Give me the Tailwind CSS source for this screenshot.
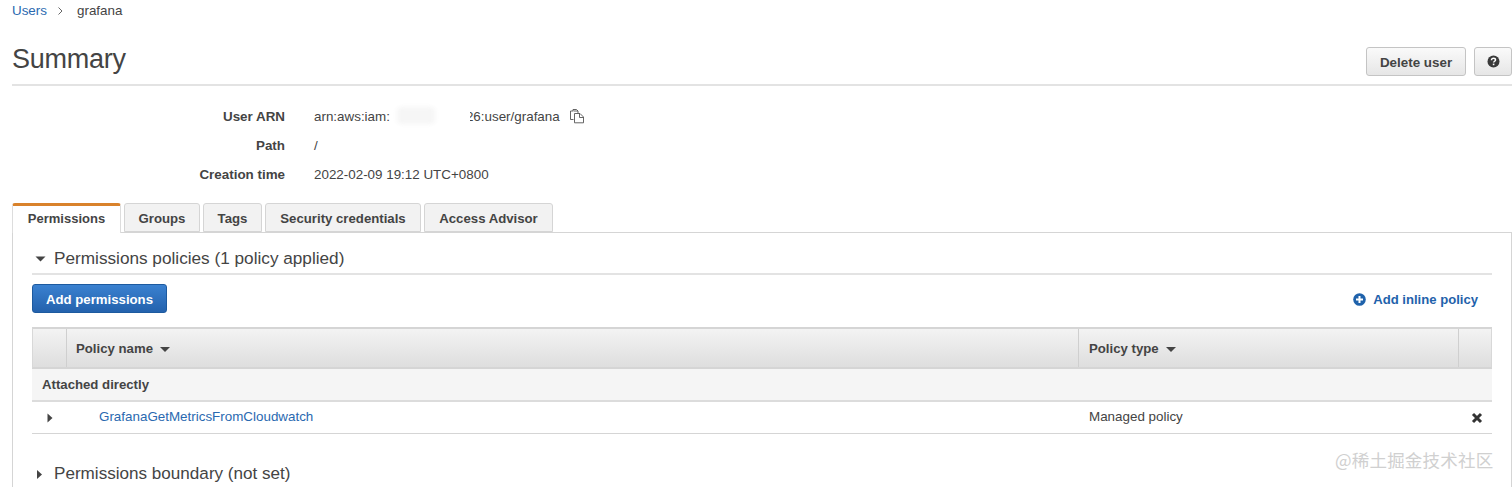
<!DOCTYPE html>
<html>
<head>
  <meta charset="UTF-8" />
  <title>Users - grafana</title>
  <script src="https://cdn.jsdelivr.net/npm/@tailwindcss/browser@4"></script>
</head>
<body class="bg-white text-[#444] font-['Liberation_Sans',Arial,sans-serif] text-[13.4px] overflow-hidden">
  <div class="relative h-[487px] w-[1512px] overflow-hidden pl-3">
    <!-- breadcrumb -->
    <div class="flex h-5 items-center pt-[2px]">
      <a class="text-[#2a69b0]">Users</a>
      <svg class="ml-[10px] mr-[13px]" width="7" height="10" viewBox="0 0 7 10"><path d="M1.5 1.5 5 5 1.5 8.500" fill="none" stroke="#666" stroke-width="1"/></svg>
      <span>grafana</span>
    </div>

    <!-- title -->
    <div class="mt-[18px] flex h-[48px] items-start justify-between border-b-2 border-[#e3e3e3]">
      <h1 class="pt-px text-[27px] leading-10 tracking-[-0.25px] text-[#444]">Summary</h1>
      <div class="mt-[9px] flex gap-2">
        <button class="h-[29px] w-[100px] rounded-[3px] border border-[#c4c4c4] bg-gradient-to-b from-[#fafafa] to-[#e6e6e6] pt-[3px] text-[13.4px] font-bold text-[#444]">Delete user</button>
        <button class="flex h-[29px] w-[38px] items-center justify-center rounded-[3px] border border-[#c4c4c4] bg-gradient-to-b from-[#fafafa] to-[#e6e6e6]">
          <svg width="13" height="13" viewBox="0 0 13 13"><circle cx="6.500" cy="6.500" r="6" fill="#3a3a3a"/><path d="M4.500 5.200C4.500 3.900 5.400 3.300 6.500 3.300S8.500 4 8.500 5C8.500 6.200 6.600 6.300 6.600 7.600" fill="none" stroke="#fff" stroke-width="1.500"/><rect x="5.800" y="8.600" width="1.600" height="1.600" fill="#fff"/></svg>
        </button>
      </div>
    </div>

    <!-- details -->
    <dl class="mt-[15px] grid grid-cols-[273px_1fr] gap-x-[29px]">
      <dt class="flex h-[29px] items-center justify-end pt-[3px] font-bold">User ARN</dt>
      <dd class="flex h-[29px] items-center">
        <span class="pt-[3px]">arn:aws:iam:</span>
        <span class="ml-[7px] mr-[31px] h-[17px] w-[38px] rounded bg-[#f6f6f6] blur-[2px]"></span>
        <span class="relative whitespace-nowrap pt-[3px]">26:user/grafana<span class="absolute bottom-0 left-0 top-0 w-[4px] bg-white"></span></span>
        <svg class="ml-[9px]" width="16" height="16" viewBox="0 0 16 16" fill="none" stroke="#555" stroke-width="0.900"><path d="M4.500 11.500H1.500V3H4V1.500H7.500L9 3V5.500"/><path d="M4.500 3H9"/><path d="M5.500 5.500H11L14.500 9V14.800H5.500Z"/><path d="M10.500 5.500V9.500H14.500"/></svg>
      </dd>
      <dt class="flex h-[29px] items-center justify-end pt-[3px] font-bold">Path</dt>
      <dd class="flex h-[29px] items-center pt-[3px]">/</dd>
      <dt class="flex h-[30px] items-center justify-end pt-[2px] font-bold">Creation time</dt>
      <dd class="flex h-[30px] items-center pt-[2px]">2022-02-09 19:12 UTC+0800</dd>
    </dl>

    <!-- tabs -->
    <div class="mt-[14px] flex h-[30px] gap-[3px] text-[13.2px] font-bold">
      <div class="z-10 flex h-[30px] w-[109px] items-center justify-center rounded-t-[3px] border-x border-t-[3px] border-x-[#ddd] border-t-[#d9822b] bg-white pb-px text-[13px]">Permissions</div>
      <div class="flex h-[29px] w-[76px] items-center justify-center rounded-t-[3px] border border-[#d5d5d5] bg-[#f2f2f2] pt-[2px]">Groups</div>
      <div class="flex h-[29px] w-[59px] items-center justify-center rounded-t-[3px] border border-[#d5d5d5] bg-[#f2f2f2] pt-[2px]">Tags</div>
      <div class="flex h-[29px] w-[156px] items-center justify-center rounded-t-[3px] border border-[#d5d5d5] bg-[#f2f2f2] pt-[2px]">Security credentials</div>
      <div class="flex h-[29px] w-[129px] items-center justify-center rounded-t-[3px] border border-[#d5d5d5] bg-[#f2f2f2] pt-[2px]">Access Advisor</div>
    </div>

    <!-- panel -->
    <div class="-mt-px h-[260px] border border-b-0 border-[#d5d5d5] px-[19px]">
      <div class="flex h-[42px] items-center border-b-2 border-[#e3e3e3] pt-[12px] text-[17.2px]">
        <svg class="ml-[3px] mr-[8px]" width="11" height="6" viewBox="0 0 11 6"><path d="M0.500 0.500H10.500L5.500 5.500Z" fill="#444"/></svg>
        Permissions policies (1 policy applied)
      </div>

      <div class="mt-[9px] flex h-[29px] items-center justify-between">
        <button class="h-[29px] w-[135px] rounded-[3px] border border-[#1d5a9f] bg-gradient-to-b from-[#3a81d0] to-[#2462ad] pt-[2px] text-[13.2px] font-bold text-white">Add permissions</button>
        <a class="flex items-center pr-[14px] pt-[2px] text-[13.1px] font-bold text-[#1f62ab]">
          <svg class="mr-[7px]" width="13" height="13" viewBox="0 0 13 13"><circle cx="6.500" cy="6.500" r="6.300" fill="#1f62ab"/><path d="M3 6.500H10M6.500 3V10" stroke="#fff" stroke-width="2"/></svg>
          Add inline policy
        </a>
      </div>

      <!-- table -->
      <div class="mt-[14px] border-b border-[#d5d5d5]">
        <div class="grid h-[42px] grid-cols-[34px_1012px_380px_1fr] border-x border-y-2 border-x-[#d8d8d8] border-y-[#d5d5d5] bg-gradient-to-b from-[#f3f3f3] to-[#dedede] text-[13.2px] font-bold">
          <div class="border-r border-[#cfcfcf]"></div>
          <div class="flex items-center border-r border-[#cfcfcf] pl-[9px] pt-[2px]">
            Policy name
            <svg class="ml-[7px]" width="10" height="5" viewBox="0 0 10 5"><path d="M0 0H10L5 5Z" fill="#444"/></svg>
          </div>
          <div class="flex items-center border-r border-[#cfcfcf] pl-[10px] pt-[2px]">
            Policy type
            <svg class="ml-[7px]" width="10" height="5" viewBox="0 0 10 5"><path d="M0 0H10L5 5Z" fill="#444"/></svg>
          </div>
          <div></div>
        </div>
        <div class="flex h-[33px] items-center border-b-2 border-[#dcdcdc] bg-[#f5f5f5] pl-[10px] text-[13.2px] font-bold">Attached directly</div>
        <div class="grid h-[31px] grid-cols-[67px_990px_1fr_34px] items-center">
          <div class="flex pl-[15px]">
            <svg width="6" height="10" viewBox="0 0 6 10"><path d="M0.500 0.500V9.500L5.500 5Z" fill="#444"/></svg>
          </div>
          <a class="text-[#2a69b0]">GrafanaGetMetricsFromCloudwatch</a>
          <div>Managed policy</div>
          <div class="flex justify-center pl-[3px]">
            <svg width="12" height="12" viewBox="0 0 12 12"><path d="M2 2 10 10M10 2 2 10" stroke="#333" stroke-width="3"/></svg>
          </div>
        </div>
      </div>

      <div class="mt-[27px] flex h-[26px] items-center text-[17.1px]">
        <svg class="ml-[5px] mr-[12px]" width="5" height="9" viewBox="0 0 5 9"><path d="M0 0V9L5 4.500Z" fill="#444"/></svg>
        Permissions boundary (not set)
      </div>
    </div>

    <!-- watermark -->
    <div class="absolute left-[1335px] top-[450px] font-['Noto_Sans_CJK_SC',sans-serif] text-[17.500px] leading-[20px] tracking-[0.2px] whitespace-nowrap text-[#d0d0d0]">@稀土掘金技术社区</div>
  </div>
</body>
</html>
